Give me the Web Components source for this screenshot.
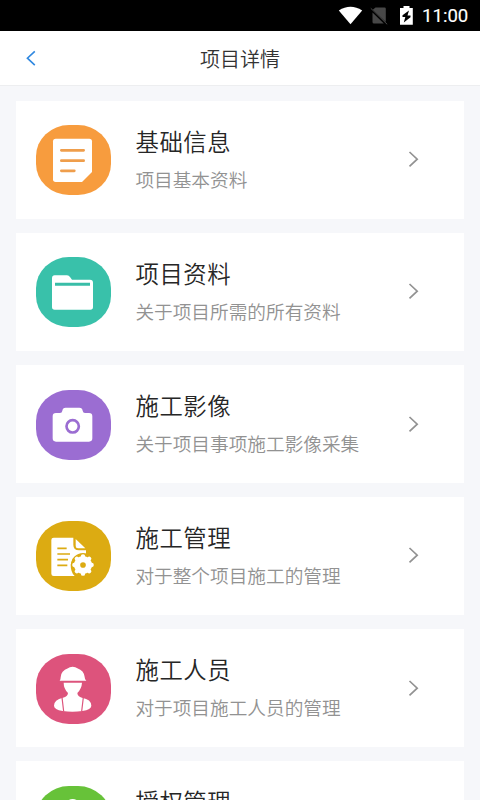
<!DOCTYPE html>
<html lang="zh-CN">
<head>
<meta charset="utf-8">
<title>项目详情</title>
<style>
html,body{margin:0;height:100%;overflow:hidden}
body{background:#f6f7fa;font-family:Roboto,"Noto Sans CJK SC",sans-serif}
</style>
</head>
<body>
<project-page></project-page>
<script>
const define = (name, css, html) => customElements.define(name, class extends HTMLElement {
  constructor() {
    super();
    this.attachShadow({mode: 'open'}).innerHTML = `<style>:host{box-sizing:border-box}svg{display:block}${css}</style>${typeof html === 'function' ? html(this) : html}`;
  }
});

define('status-bar', `
:host{display:flex;height:31px;background:#000;color:#fff;align-items:flex-start;justify-content:flex-end}
svg{width:80px;height:31px}
span{font-size:18.6px;line-height:33px;width:59px;padding-left:1px;font-weight:400;-webkit-text-stroke:.15px #fff;box-sizing:border-box;white-space:nowrap}
`, `<svg viewBox="341 0 80 31" overflow="visible">
<path d="M338.8 10.5Q350.5 3 362.2 10.5L350.5 24.3Z" fill="#fff"/>
<path d="M375.5 7.5h9q1.3 0 1.3 1.3v13.2l-13-12.2ZM372.5 12.5l11.3 11h-9.8q-1.5 0-1.5-1.5Z" fill="#484848"/>
<path d="M370.8 8.3l16.4 16" stroke="#484848" stroke-width="1"/>
<path d="M400 8h3.5V6h6v2h3.3v16.7H400Z" fill="#fff"/>
<path d="M409 10.5l-6.5 4.8v1.7h2.8l-1.5 5.5 6.7-5.2v-1.8h-3Z" fill="#000"/>
</svg><span>11:00</span>`);

define('nav-bar', `
:host{display:grid;grid-template-columns:60px 1fr 60px;align-items:center;height:55px;background:#fff;border-bottom:1px solid #edeef0}
svg{width:12px;height:18px;margin:0 0 0 25px}
h1{margin:3px 0 0;font-size:20px;line-height:30px;font-weight:350;text-align:center;color:#333}
`, `<svg viewBox="0 0 12 18" fill="none" stroke="#3088e0" stroke-width="1.6"><path d="M9.8 2.3L2.4 9.2l7.4 7"/></svg><h1><slot></slot></h1>`);

const icons = {
doc: ['#f79c3e', `<path d="M137 131h101q8 0 8 8v92l-30 30h-79q-8 0-8-8V139q0-8 8-8Z" fill="#fff"/><path d="M154 166h67M154 197h67M154 227.5h39" stroke="#ef9e4c" stroke-width="8" stroke-linecap="round"/>`],
folder: ['#39c1aa', `<path d="M134 145h37q6 0 9 5l6 8h54q9 0 9 9v73q0 8-8 8H134q-8 0-8-8v-86q0-9 8-9Z" fill="#fff"/><path d="M135 167h105v9H135Z" fill="#39bda7"/>`],
camera: ['#9b6dd2', `<path d="M138 159h12q6 0 7-7 1-9 10-9h41q9 0 10 9 1 7 7 7h12q10 0 10 10v66q0 10-10 10h-99q-10 0-10-10v-66q0-10 10-10Z" fill="#fff"/><circle cx="188" cy="199" r="18.5" fill="none" stroke="#9b6dd2" stroke-width="8"/>`],
manage: ['#dcab12', `<path d="M131 140h59v21q0 17 17 17h21v14q-42-4-46 29 0 23 12 34h-63q-7 0-7-7v-101q0-7 7-7Z" fill="#fff"/><path d="M197 144l29 28h-22q-7 0-7-7Z" fill="#fff"/><path d="M142 172h28M142 189h38M142 206h32M142 223h30" stroke="#dcab12" stroke-width="5"/><circle cx="219" cy="222" r="36" fill="#dcab12"/><circle cx="219" cy="222" r="27" fill="#fff"/><g transform="translate(219 222)" stroke="#fff" stroke-width="13" stroke-linecap="round"><path d="M0-26V26M-26 0H26M-18.5-18.5l37 37M-18.5 18.5l37-37"/></g><circle cx="219" cy="222" r="8.5" fill="#dcab12"/>`],
worker: ['#dd537c', `<path d="M149 170q3-3 3-10 1-20 22-27 4-5 14-5 9 0 14 5 20 7 22 26 0 8 5 11Z" fill="#fff"/><path d="M161 176h55q-1 18-14 31 1 11 14 14 28 5 28 24 0 11-27 16-30 4-59 0-26-5-26-16 0-18 27-24 14-3 15-14-13-13-13-31Z" fill="#fff"/><path d="M156 220l5 42M220 220l-5 42" stroke="#dd537c" stroke-width="3.5"/>`],
grant: ['#67c239', `<circle cx="188" cy="152" r="23" fill="#fff"/><path d="M130 235q0-48 58-48t58 48Z" fill="#fff"/>`]
};
define('module-icon', `:host{display:block;width:75px;height:70px}svg{width:75px;height:70px}`, el => {
  const [color, art] = icons[el.getAttribute('kind')];
  return `<svg viewBox="78 90 225 210"><rect x="78" y="90" width="225" height="210" rx="99" ry="94" fill="${color}"/>${art}</svg>`;
});

define('module-card', `
:host{display:grid;grid-template-columns:75px 1fr 12px;column-gap:24px;height:118px;padding:24px 44px 0 20px;background:#fff;align-items:start}
:host([kind=folder]){--nudge:.4px}
:host([kind=camera]),:host([kind=worker]),:host([kind=grant]){--nudge:1px}
module-icon{margin-top:var(--nudge,0px)}
h2{margin:2px 0 0;font-size:23.4px;line-height:32px;font-weight:350;letter-spacing:.6px;color:#262626}
p{margin:8px 0 0;font-size:18.67px;line-height:28px;font-weight:350;color:#929292;white-space:nowrap}
.text{padding-left:.4px}
.go{width:12px;height:18px;margin-top:calc(25px + var(--nudge,0px))}
`, el => `<module-icon kind="${el.getAttribute('kind')}"></module-icon><div class="text"><h2><slot name="title"></slot></h2><p><slot></slot></p></div><svg class="go" viewBox="0 0 12 18" fill="none" stroke="#929292" stroke-width="1.7"><path d="M1.5 2l7.7 7.2-7.7 7.2"/></svg>`);

define('module-list', `:host{display:flex;flex-direction:column;gap:14.1px;padding:15px 16px 0}::slotted(*){flex:none}`, `<slot></slot>`);

define('project-page', `:host{display:flex;flex-direction:column;height:800px;overflow:hidden}status-bar,nav-bar{flex:none}`, `
<status-bar></status-bar>
<nav-bar>项目详情</nav-bar>
<module-list>
<module-card kind="doc"><span slot="title">基础信息</span>项目基本资料</module-card>
<module-card kind="folder"><span slot="title">项目资料</span>关于项目所需的所有资料</module-card>
<module-card kind="camera"><span slot="title">施工影像</span>关于项目事项施工影像采集</module-card>
<module-card kind="manage"><span slot="title">施工管理</span>对于整个项目施工的管理</module-card>
<module-card kind="worker"><span slot="title">施工人员</span>对于项目施工人员的管理</module-card>
<module-card kind="grant"><span slot="title">授权管理</span></module-card>
</module-list>`);
</script>
</body>
</html>
